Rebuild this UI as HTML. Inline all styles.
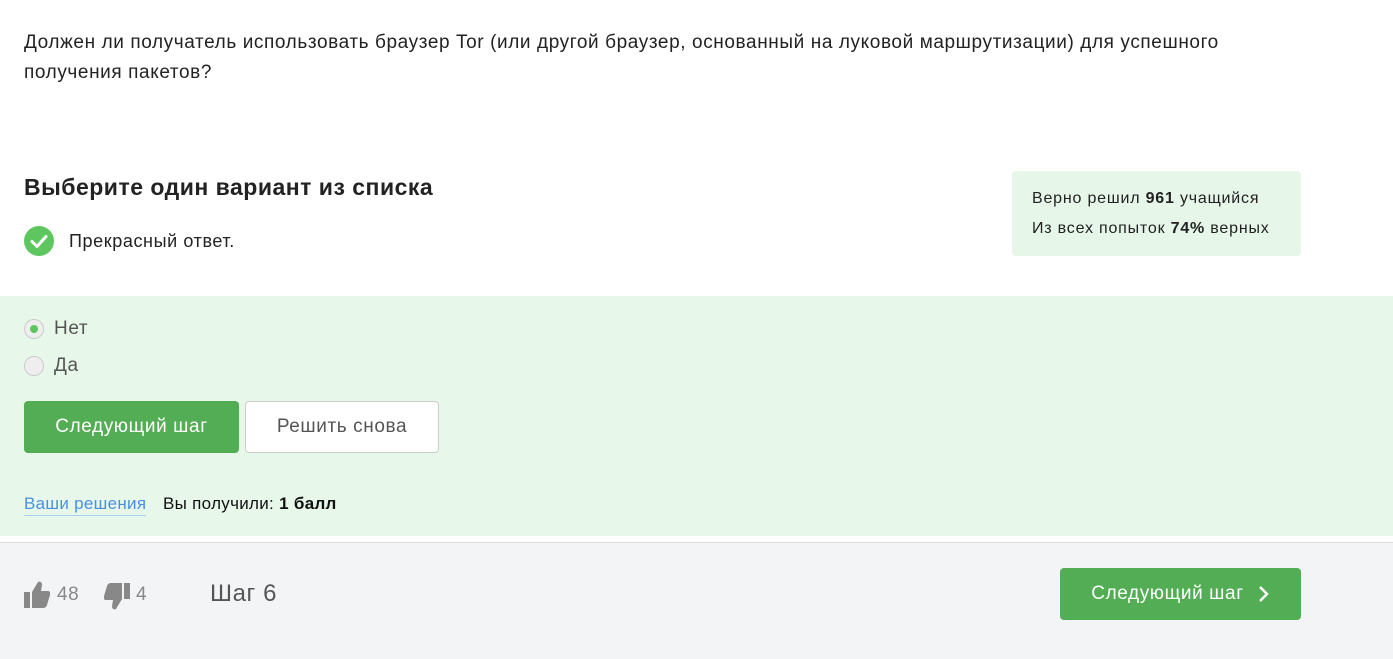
<!DOCTYPE html>
<html><head><meta charset="utf-8"><style>
*{margin:0;padding:0;box-sizing:border-box}
body{width:1393px;height:659px;overflow:hidden;background:#fff;font-family:"Liberation Sans",sans-serif;color:#222;position:relative;letter-spacing:0.6px}
.abs{position:absolute}
.q{left:24px;top:28px;font-size:19px;line-height:30px;color:#222;width:1215px}
.h{left:24px;top:174px;font-size:23px;font-weight:bold;color:#222;letter-spacing:0.5px}
.ok{left:24px;top:226px;display:flex;align-items:center;font-size:18px}
.stat{left:1012px;top:171px;width:289px;height:85px;background:#e6f6e9;border-radius:4px;padding:13px 20px;font-size:16px;line-height:30px;color:#222;letter-spacing:0.8px}
.green{left:0;top:296px;width:1393px;height:240px;background:#e7f7ea}
.radio{width:20px;height:20px;border-radius:50%;border:1px solid #ccc;background:#eee;display:inline-block;position:relative}
.radio.on:after{content:"";position:absolute;left:5px;top:5px;width:8px;height:8px;border-radius:50%;background:#5ec65e}
.opt{left:24px;display:flex;align-items:center;font-size:19px;color:#555}
.opt span{margin-left:10px}
.btn{top:401px;height:52px;border-radius:4px;font-size:19px;display:flex;align-items:center;justify-content:center}
.foot{left:0;top:542px;width:1393px;height:117px;background:#f3f4f6;border-top:1px solid #ddd}
</style></head><body>
<div class="abs q">Должен ли получатель использовать браузер Tor (или другой браузер, основанный на луковой маршрутизации) для успешного получения пакетов?</div>
<div class="abs h">Выберите один вариант из списка</div>
<div class="abs ok"><svg width="30" height="30" viewBox="0 0 30 30"><circle cx="15" cy="15" r="15" fill="#5ec65e"/><path d="M8 15.5l5 5 9-10" stroke="#fff" stroke-width="3" fill="none" stroke-linecap="round" stroke-linejoin="round"/></svg><span style="margin-left:15px">Прекрасный ответ.</span></div>
<div class="abs stat">Верно решил <b>961</b> учащийся<br>Из всех попыток <b>74%</b> верных</div>
<div class="abs green"></div>
<div class="abs opt" style="top:318px"><i class="radio on"></i><span>Нет</span></div>
<div class="abs opt" style="top:355px"><i class="radio"></i><span>Да</span></div>
<div class="abs btn" style="left:24px;width:215px;background:#53ad55;color:#fff">Следующий шаг</div>
<div class="abs btn" style="left:245px;width:194px;background:#fff;border:1px solid #ccc;color:#555">Решить снова</div>
<div class="abs" style="left:24px;top:493px;font-size:17px;color:#4a90e2;border-bottom:1px solid #a9d0f5;line-height:22px;letter-spacing:0.3px">Ваши решения</div>
<div class="abs" style="left:163px;top:493px;font-size:17px;line-height:22px;color:#111;letter-spacing:0.3px">Вы получили: <b>1 балл</b></div>
<div class="abs foot"></div>
<svg class="abs" style="left:24px;top:580px" width="26" height="28" viewBox="0 0 26 28"><path d="M0 12h6v16H0zM8 12l6-10c2-1 4 0 4 3l-1 6h7c2 0 3 2 2 4l-3 10c-1 2-2 3-4 3H8z" fill="#888"/></svg>
<div class="abs" style="left:57px;top:584px;font-size:19px;color:#888">48</div>
<svg class="abs" style="left:104px;top:583px" width="26" height="28" viewBox="0 0 26 28" transform="scale(1,-1)"><path d="M20 12h6v16h-6zM18 12l-6-10c-2-1-4 0-4 3l1 6H2c-2 0-3 2-2 4l3 10c1 2 2 3 4 3h11z" fill="#888"/></svg>
<div class="abs" style="left:136px;top:584px;font-size:19px;color:#888">4</div>
<div class="abs" style="left:210px;top:580px;font-size:24px;color:#555">Шаг 6</div>
<div class="abs btn" style="left:1060px;top:568px;width:241px;background:#53ad55;color:#fff">Следующий шаг<svg style="margin-left:14px" width="12" height="18" viewBox="0 0 12 18"><path d="M2 2l7 7-7 7" stroke="#fff" stroke-width="2.5" fill="none"/></svg></div>
</body></html>
